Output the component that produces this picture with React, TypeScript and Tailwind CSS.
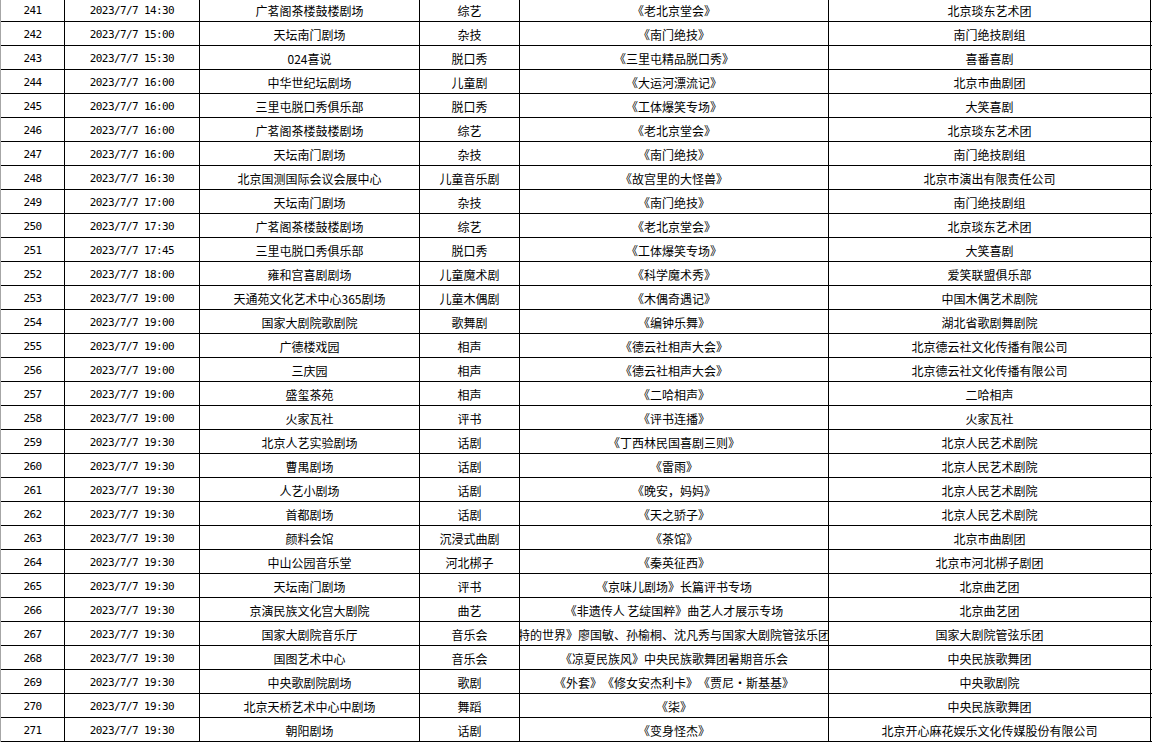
type Row = [number, string, string, string, string, string];

const rows: Row[] = [
  [241, '2023/7/7 14:30', '广茗阁茶楼鼓楼剧场', '综艺', '《老北京堂会》', '北京琰东艺术团'],
  [242, '2023/7/7 15:00', '天坛南门剧场', '杂技', '《南门绝技》', '南门绝技剧组'],
  [243, '2023/7/7 15:30', '024喜说', '脱口秀', '《三里屯精品脱口秀》', '喜番喜剧'],
  [244, '2023/7/7 16:00', '中华世纪坛剧场', '儿童剧', '《大运河漂流记》', '北京市曲剧团'],
  [245, '2023/7/7 16:00', '三里屯脱口秀俱乐部', '脱口秀', '《工体爆笑专场》', '大笑喜剧'],
  [246, '2023/7/7 16:00', '广茗阁茶楼鼓楼剧场', '综艺', '《老北京堂会》', '北京琰东艺术团'],
  [247, '2023/7/7 16:00', '天坛南门剧场', '杂技', '《南门绝技》', '南门绝技剧组'],
  [248, '2023/7/7 16:30', '北京国测国际会议会展中心', '儿童音乐剧', '《故宫里的大怪兽》', '北京市演出有限责任公司'],
  [249, '2023/7/7 17:00', '天坛南门剧场', '杂技', '《南门绝技》', '南门绝技剧组'],
  [250, '2023/7/7 17:30', '广茗阁茶楼鼓楼剧场', '综艺', '《老北京堂会》', '北京琰东艺术团'],
  [251, '2023/7/7 17:45', '三里屯脱口秀俱乐部', '脱口秀', '《工体爆笑专场》', '大笑喜剧'],
  [252, '2023/7/7 18:00', '雍和宫喜剧剧场', '儿童魔术剧', '《科学魔术秀》', '爱笑联盟俱乐部'],
  [253, '2023/7/7 19:00', '天通苑文化艺术中心365剧场', '儿童木偶剧', '《木偶奇遇记》', '中国木偶艺术剧院'],
  [254, '2023/7/7 19:00', '国家大剧院歌剧院', '歌舞剧', '《编钟乐舞》', '湖北省歌剧舞剧院'],
  [255, '2023/7/7 19:00', '广德楼戏园', '相声', '《德云社相声大会》', '北京德云社文化传播有限公司'],
  [256, '2023/7/7 19:00', '三庆园', '相声', '《德云社相声大会》', '北京德云社文化传播有限公司'],
  [257, '2023/7/7 19:00', '盛玺茶苑', '相声', '《二哈相声》', '二哈相声'],
  [258, '2023/7/7 19:00', '火家瓦社', '评书', '《评书连播》', '火家瓦社'],
  [259, '2023/7/7 19:30', '北京人艺实验剧场', '话剧', '《丁西林民国喜剧三则》', '北京人民艺术剧院'],
  [260, '2023/7/7 19:30', '曹禺剧场', '话剧', '《雷雨》', '北京人民艺术剧院'],
  [261, '2023/7/7 19:30', '人艺小剧场', '话剧', '《晚安，妈妈》', '北京人民艺术剧院'],
  [262, '2023/7/7 19:30', '首都剧场', '话剧', '《天之骄子》', '北京人民艺术剧院'],
  [263, '2023/7/7 19:30', '颜料会馆', '沉浸式曲剧', '《茶馆》', '北京市曲剧团'],
  [264, '2023/7/7 19:30', '中山公园音乐堂', '河北梆子', '《秦英征西》', '北京市河北梆子剧团'],
  [265, '2023/7/7 19:30', '天坛南门剧场', '评书', '《京味儿剧场》长篇评书专场', '北京曲艺团'],
  [266, '2023/7/7 19:30', '京演民族文化宫大剧院', '曲艺', '《非遗传人 艺绽国粹》曲艺人才展示专场', '北京曲艺团'],
  [267, '2023/7/7 19:30', '国家大剧院音乐厅', '音乐会', '《莫扎特的世界》廖国敏、孙榆桐、沈凡秀与国家大剧院管弦乐团音乐会', '国家大剧院管弦乐团'],
  [268, '2023/7/7 19:30', '国图艺术中心', '音乐会', '《凉夏民族风》中央民族歌舞团暑期音乐会', '中央民族歌舞团'],
  [269, '2023/7/7 19:30', '中央歌剧院剧场', '歌剧', '《外套》《修女安杰利卡》《贾尼・斯基基》', '中央歌剧院'],
  [270, '2023/7/7 19:30', '北京天桥艺术中心中剧场', '舞蹈', '《柒》', '中央民族歌舞团'],
  [271, '2023/7/7 19:30', '朝阳剧场', '话剧', '《变身怪杰》', '北京开心麻花娱乐文化传媒股份有限公司'],
];

const mono = "font-['DejaVu_Sans_Mono','Noto_Sans_CJK_SC',monospace] text-[11px] tracking-[-0.6px]";
const cjk = "font-['Noto_Sans_CJK_SC','Liberation_Sans',sans-serif] text-[12px] [text-spacing-trim:space-all]";

function Cell({ text, font }: { text: string | number; font: string }) {
  return (
    <div className="flex h-full items-center justify-center overflow-hidden whitespace-nowrap border-r border-black pt-[2px]">
      <span className={`${font} leading-none text-black`}>{text}</span>
    </div>
  );
}

export default function App() {
  return (
    <div className="h-[743px] w-[1152px] overflow-hidden bg-white">
      <div className="-mt-[2px] border-l border-[#a6a6a6]">
        {rows.map(r => (
          <div
            key={r[0]}
            className="grid h-[24px] grid-cols-[64px_135px_220px_100px_309px_322px] border-b border-black"
          >
            <Cell text={r[0]} font={mono} />
            <Cell text={r[1]} font={mono} />
            <Cell text={r[2]} font={cjk} />
            <Cell text={r[3]} font={cjk} />
            <Cell text={r[4]} font={cjk} />
            <Cell text={r[5]} font={cjk} />
          </div>
        ))}
      </div>
    </div>
  );
}
